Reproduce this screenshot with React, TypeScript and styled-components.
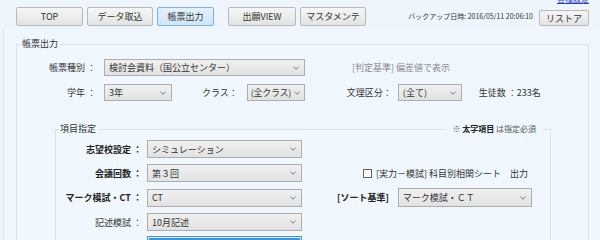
import styled, { createGlobalStyle } from "styled-components";

const GlobalStyle = createGlobalStyle`
  html, body {
    margin: 0;
    padding: 0;
    background: #eef5fc;
  }
  body {
    width: 600px;
    height: 240px;
    overflow: hidden;
    font-family: "Noto Sans CJK JP", "Noto Sans", sans-serif;
    font-size: 9px;
    color: #333;
  }
`;

const Top = styled.div`
  height: 30px;
`;

const LinkRow = styled.div`
  height: 4px;
  display: flex;
  justify-content: flex-end;
  padding-right: 11px;
`;

const HelpLink = styled.a`
  margin-top: -5px;
  font-size: 8px;
  line-height: 8px;
  color: #2a3fd0;
  text-decoration: underline;
`;

const Toolbar = styled.div`
  margin-top: 3px;
  height: 19px;
  display: flex;
  align-items: flex-start;
  padding: 0 11px 0 16px;
`;

const NavButton = styled.button<{ $w: number; $active?: boolean; $gap?: number }>`
  box-sizing: border-box;
  width: ${(p) => p.$w}px;
  height: 19px;
  margin-right: ${(p) => p.$gap ?? 4}px;
  padding: 0;
  font-family: inherit;
  font-size: 9px;
  color: #333;
  border: 1px solid ${(p) => (p.$active ? "#7fb2e0" : "#b9b9b9")};
  border-radius: 2px;
  background: ${(p) =>
    p.$active
      ? "linear-gradient(#e4f1fc, #cfe5f8)"
      : "linear-gradient(#f6f6f6, #e3e3e3)"};
`;

const Spacer = styled.div`
  flex: 1;
`;

const Backup = styled.span`
  margin-top: 5px;
  margin-right: 6px;
  font-size: 7px;
  line-height: 9px;
  white-space: nowrap;
  color: #333;
`;

const RestoreButton = styled(NavButton)`
  height: 16px;
  margin-top: 3px;
  margin-right: 0;
`;

const Main = styled.div`
  margin-left: 3px;
  height: 210px;
  border-left: 1px solid #dde3ea;
  background: #f0f7fe;
  padding: 8px 11px 0 12px;
`;

const Group = styled.fieldset<{ $inset?: boolean }>`
  margin: ${(p) => (p.$inset ? "22px 37px 0 35px" : "0")};
  padding: ${(p) => (p.$inset ? "5px 8px 0 3px" : "9px 0 0 3px")};
  border: 1px solid #d9e1e8;
  min-width: 0;
`;

const Legend = styled.legend`
  padding: 0 2px;
  font-size: 9px;
  line-height: 12px;
  color: #333;
`;

const WideLegend = styled.legend`
  width: 100%;
  box-sizing: border-box;
  display: flex;
  align-items: center;
  padding: 0;
  line-height: 12px;
`;

const LegendTitle = styled.span`
  padding: 0 3px 0 1px;
  font-size: 9px;
  color: #333;
`;

const LegendLine = styled.span`
  flex: 1;
  height: 1px;
  background: #d9e1e8;
`;

const Note = styled.span`
  padding: 0 6px;
  font-size: 8px;
  color: #555;

  b {
    color: #222;
  }
`;

const Row = styled.div<{ $top?: number }>`
  display: flex;
  align-items: center;
  margin-top: ${(p) => p.$top ?? 0}px;
`;

const Label = styled.span<{ $w: number; $bold?: boolean; $gap: number }>`
  width: ${(p) => p.$w}px;
  margin-right: ${(p) => p.$gap}px;
  text-align: right;
  white-space: nowrap;
  font-weight: ${(p) => (p.$bold ? 700 : 400)};
  color: ${(p) => (p.$bold ? "#222" : "#333")};
`;

const InlineLabel = styled.span<{ $left: number; $gap?: number; $bold?: boolean }>`
  margin-left: ${(p) => p.$left}px;
  margin-right: ${(p) => p.$gap ?? 0}px;
  white-space: nowrap;
  font-weight: ${(p) => (p.$bold ? 700 : 400)};
  color: ${(p) => (p.$bold ? "#222" : "#333")};
`;

const Hint = styled.span<{ $left: number }>`
  margin-left: ${(p) => p.$left}px;
  color: #8a8a8a;
  white-space: nowrap;
`;

const SelectBox = styled.div<{ $w: number; $h: number; $focus?: boolean; $tight?: boolean }>`
  box-sizing: border-box;
  width: ${(p) => p.$w}px;
  height: ${(p) => p.$h}px;
  display: flex;
  align-items: center;
  gap: ${(p) => (p.$tight ? 1 : 2)}px;
  padding: ${(p) => (p.$tight ? "0 4px 0 3px" : "0 5px 0 4px")};
  letter-spacing: ${(p) => (p.$tight ? "-0.3px" : "0")};
  border: 1px solid ${(p) => (p.$focus ? "#4f92d6" : "#adadad")};
  box-shadow: ${(p) => (p.$focus ? "inset 0 0 0 1px #d8ebfb" : "none")};
  background: ${(p) =>
    p.$focus ? "#3d93e6" : "linear-gradient(#f0f0f0, #e2e2e2)"};
  color: ${(p) => (p.$focus ? "#fff" : "#333")};
  white-space: nowrap;

  svg {
    flex-shrink: 0;
  }
`;

const SelectText = styled.span`
  flex: 1;
  overflow: hidden;
`;

const Check = styled.span<{ $left: number }>`
  display: inline-block;
  box-sizing: border-box;
  width: 9px;
  height: 9px;
  margin-left: ${(p) => p.$left}px;
  margin-right: 4px;
  border: 1px solid #666;
  background: #fff;
`;

function Chevron() {
  return (
    <svg width="6" height="4" viewBox="0 0 6 4">
      <path d="M0.5 0.8 L3 3.2 L5.5 0.8" fill="none" stroke="#777" strokeWidth="1" />
    </svg>
  );
}

function Select(props: {
  w: number;
  h?: number;
  value: string;
  focus?: boolean;
  tight?: boolean;
}) {
  return (
    <SelectBox
      $w={props.w}
      $h={props.h ?? 17}
      $focus={props.focus}
      $tight={props.tight}
    >
      <SelectText>{props.value}</SelectText>
      <Chevron />
    </SelectBox>
  );
}

export default function App() {
  return (
    <>
      <GlobalStyle />
      <Top>
        <LinkRow>
          <HelpLink href="#">各種設定</HelpLink>
        </LinkRow>
        <Toolbar>
          <NavButton $w={67}>TOP</NavButton>
          <NavButton $w={66}>データ取込</NavButton>
          <NavButton $w={57} $active $gap={14}>
            帳票出力
          </NavButton>
          <NavButton $w={68}>出願VIEW</NavButton>
          <NavButton $w={66}>マスタメンテ</NavButton>
          <Spacer />
          <Backup>バックアップ日時: 2016/05/11 20:06:10</Backup>
          <RestoreButton $w={50}>リストア</RestoreButton>
        </Toolbar>
      </Top>

      <Main>
        <Group>
          <Legend>帳票出力</Legend>
          <Row>
            <Label $w={76} $gap={8}>帳票種別 ：</Label>
            <Select w={201} value="検討会資料（国公立センター）" />
            <Hint $left={47}>[判定基準] 偏差値で表示</Hint>
          </Row>
          <Row $top={8}>
            <Label $w={76} $gap={8}>学年 ：</Label>
            <Select w={68} value="3年" />
            <InlineLabel $left={30} $gap={9}>クラス：</InlineLabel>
            <Select w={58} value="(全クラス)" tight />
            <InlineLabel $left={42} $gap={6}>文理区分：</InlineLabel>
            <Select w={64} value="(全て)" />
            <InlineLabel $left={17}>生徒数 ：233名</InlineLabel>
          </Row>

          <Group $inset>
            <WideLegend>
              <LegendTitle>項目指定</LegendTitle>
              <LegendLine />
              <Note>
                ※ <b>太字項目</b> は指定必須
              </Note>
            </WideLegend>
            <Row>
              <Label $w={83} $gap={5} $bold>志望校設定 ：</Label>
              <Select w={155} h={18} value="シミュレーション" />
            </Row>
            <Row $top={6}>
              <Label $w={83} $gap={5} $bold>会議回数 ：</Label>
              <Select w={155} h={18} value="第３回" />
              <Check $left={61} />
              <span>[実力－模試] 科目別相関シート　出力</span>
            </Row>
            <Row $top={6}>
              <Label $w={83} $gap={5} $bold>マーク模試・CT ：</Label>
              <Select w={155} h={18} value="CT" />
              <InlineLabel $left={35} $gap={9} $bold>[ソート基準]</InlineLabel>
              <Select w={134} h={19} value="マーク模試・ＣＴ" />
            </Row>
            <Row $top={6}>
              <Label $w={83} $gap={5}>記述模試 ：</Label>
              <Select w={155} h={18} value="10月記述" />
            </Row>
            <Row $top={5}>
              <Label $w={83} $gap={5}>出力対象 ：</Label>
              <Select w={155} h={18} value="第一志望" focus />
            </Row>
          </Group>
        </Group>
      </Main>
    </>
  );
}
